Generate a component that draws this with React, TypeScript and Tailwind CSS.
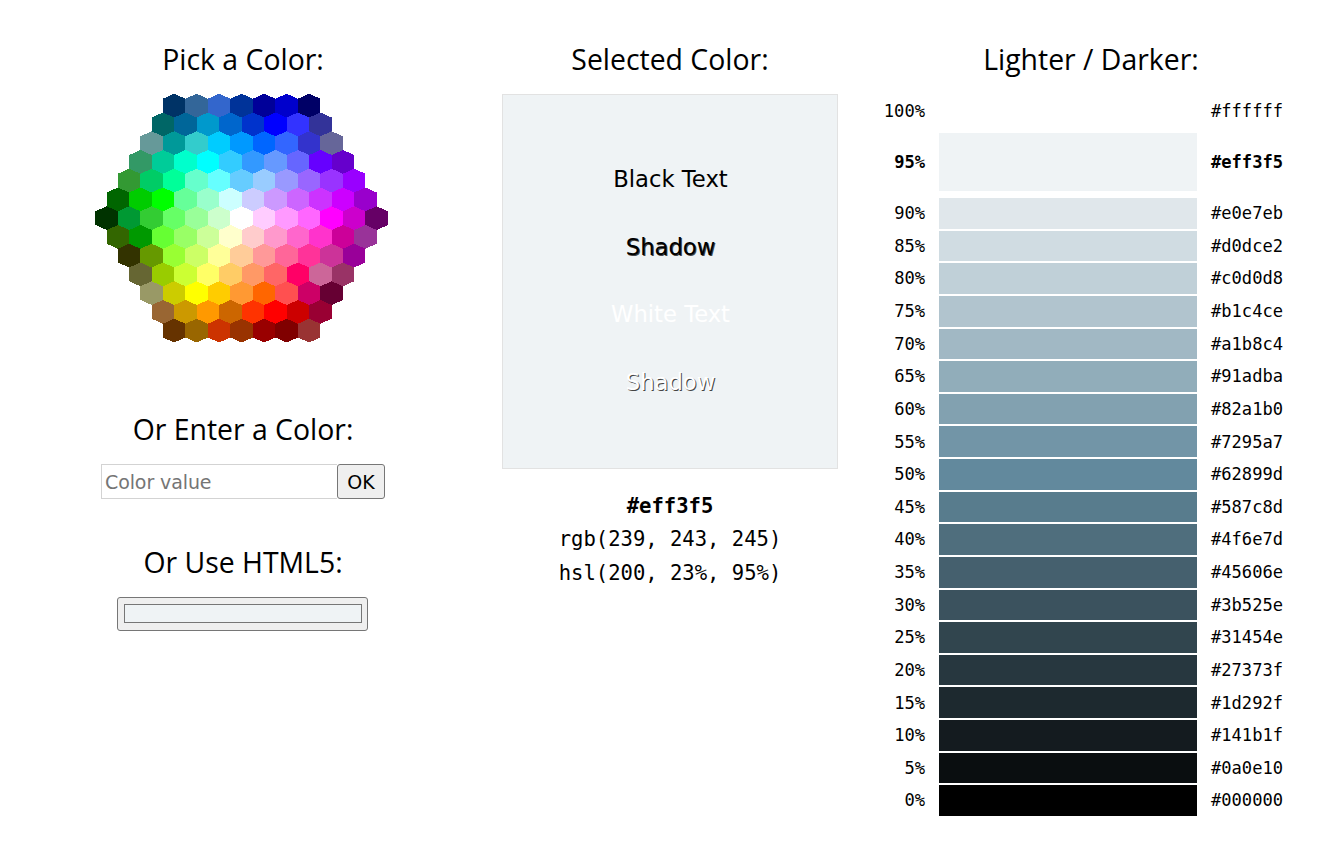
const HEX_ROWS: string[] = [
  '003366 336699 3366cc 003399 000099 0000cc 000066',
  '006666 006699 0099cc 0066cc 0033cc 0000ff 3333ff 333399',
  '669999 009999 33cccc 00ccff 0099ff 0066ff 3366ff 3333cc 666699',
  '339966 00cc99 00ffcc 00ffff 33ccff 3399ff 6699ff 6666ff 6600ff 6600cc',
  '339933 00cc66 00ff99 66ffcc 66ffff 66ccff 99ccff 9999ff 9966ff 9933ff 9900ff',
  '006600 00cc00 00ff00 66ff99 99ffcc ccffff ccccff cc99ff cc66ff cc33ff cc00ff 9900cc',
  '003300 009933 33cc33 66ff66 99ff99 ccffcc ffffff ffccff ff99ff ff66ff ff00ff cc00cc 660066',
  '336600 009900 66ff33 99ff66 ccff99 ffffcc ffcccc ff99cc ff66cc ff33cc cc0099 993399',
  '333300 669900 99ff33 ccff66 ffff99 ffcc99 ff9999 ff6699 ff3399 cc3399 990099',
  '666633 99cc00 ccff33 ffff66 ffcc66 ff9966 ff6666 ff0066 cc6699 993366',
  '999966 cccc00 ffff00 ffcc00 ff9933 ff6600 ff5050 cc0066 660033',
  '996633 cc9900 ff9900 cc6600 ff3300 ff0000 cc0000 990033',
  '663300 996600 cc3300 993300 990000 800000 993333',
];

const SHADES: [string, string][] = [
  ['90%', '#e0e7eb'], ['85%', '#d0dce2'], ['80%', '#c0d0d8'], ['75%', '#b1c4ce'],
  ['70%', '#a1b8c4'], ['65%', '#91adba'], ['60%', '#82a1b0'], ['55%', '#7295a7'],
  ['50%', '#62899d'], ['45%', '#587c8d'], ['40%', '#4f6e7d'], ['35%', '#45606e'],
  ['30%', '#3b525e'], ['25%', '#31454e'], ['20%', '#27373f'], ['15%', '#1d292f'],
  ['10%', '#141b1f'], ['5%', '#0a0e10'], ['0%', '#000000'],
];

function HexMap() {
  return (
    <svg width="293" height="249" viewBox="-0.3 0.2 234.4 199.2" shapeRendering="crispEdges" className="block">
      {HEX_ROWS.map((row, r) => {
        const colors = row.split(' ');
        const x0 = (13 - colors.length) * 9;
        const y = r * 15;
        return colors.map((c, i) => {
          const x = x0 + i * 18;
          return (
            <polygon
              key={`${r}-${i}`}
              fill={`#${c}`}
              points={`${x + 9},${y} ${x + 18},${y + 4} ${x + 18},${y + 15} ${x + 9},${y + 19} ${x},${y + 15} ${x},${y + 4}`}
            />
          );
        });
      })}
    </svg>
  );
}

function Heading({ children, className = '' }: { children: string; className?: string }) {
  return (
    <h3 className={`h-[45px] whitespace-nowrap text-center font-['Open_Sans','Noto_Sans',sans-serif] text-[28.4px] font-normal leading-[45px] ${className}`}>
      {children}
    </h3>
  );
}

function ShadeRow({ pct, hex, height, bold }: { pct: string; hex: string; height: string; bold?: boolean }) {
  return (
    <div className={`flex items-center ${height} ${bold ? 'font-bold' : ''}`}>
      <span className="w-[42px] pt-[1.4px] text-right">{pct}</span>
      <div className="ml-[14px] h-full w-[258px]" style={{ backgroundColor: hex }} />
      <span className="ml-[14px] pt-[1.4px]">{hex}</span>
    </div>
  );
}

export default function App() {
  return (
    <div className="flex h-[842px] w-[1335px] overflow-hidden bg-white font-['DejaVu_Sans',sans-serif] text-black">
      <section className="flex w-[486px] flex-col items-center pt-[37px]">
        <Heading>Pick a Color:</Heading>
        <div className="mt-3 w-[296px]">
          <HexMap />
        </div>
        <Heading className="mt-16">Or Enter a Color:</Heading>
        <div className="mt-3 flex h-[35px]">
          <input
            placeholder="Color value"
            className="w-[236px] border border-r-0 border-[#d3d3d3] px-[3px] pt-[2px] text-[19px] tracking-[-0.1px] outline-none placeholder:text-[#757575]"
          />
          <button className="w-12 rounded-[3px] border border-[#767676] bg-[#efefef] pt-[2px] text-[19px]">OK</button>
        </div>
        <Heading className="mt-[41px]">Or Use HTML5:</Heading>
        <div className="mr-px mt-3 h-[34px] w-[251px] rounded-[3px] border border-[#767676] bg-[#efefef] px-[6px] pb-[7px] pt-[6px] pr-[5px]">
          <div className="h-full border border-[#767676] bg-[#eff3f5]" />
        </div>
      </section>

      <section className="ml-4 w-[336px] pt-[37px]">
        <Heading>Selected Color:</Heading>
        <div className="mt-3 flex h-[375px] flex-col justify-center gap-[33.75px] border border-[#e2e2e2] bg-[#eff3f5] pl-px text-center text-[22.7px] leading-[33.75px]">
          <div>Black Text</div>
          <div className="[text-shadow:1px_1px_0_#444]">Shadow</div>
          <div className="text-white">White Text</div>
          <div className="text-white [text-shadow:1px_1px_0_#444]">Shadow</div>
        </div>
        <div className="mt-[21px] text-center font-['DejaVu_Sans_Mono',monospace] text-[20.55px] leading-[33.3px]">
          <div className="font-bold">#eff3f5</div>
          <div>rgb(239, 243, 245)</div>
          <div>hsl(200, 23%, 95%)</div>
        </div>
      </section>

      <section className="ml-[45px] w-[416px] pt-[37px]">
        <Heading>Lighter / Darker:</Heading>
        <div className="mt-3 font-['DejaVu_Sans_Mono',monospace] text-[17.1px]">
          <ShadeRow pct="100%" hex="#ffffff" height="h-[34px]" />
          <div className="mb-[7px] mt-[5px]">
            <ShadeRow pct="95%" hex="#eff3f5" height="h-[58px]" bold />
          </div>
          <div className="flex flex-col gap-[2px]">
            {SHADES.map(([pct, hex]) => (
              <ShadeRow key={pct} pct={pct} hex={hex} height="h-[30.63px]" />
            ))}
          </div>
        </div>
      </section>
    </div>
  );
}
